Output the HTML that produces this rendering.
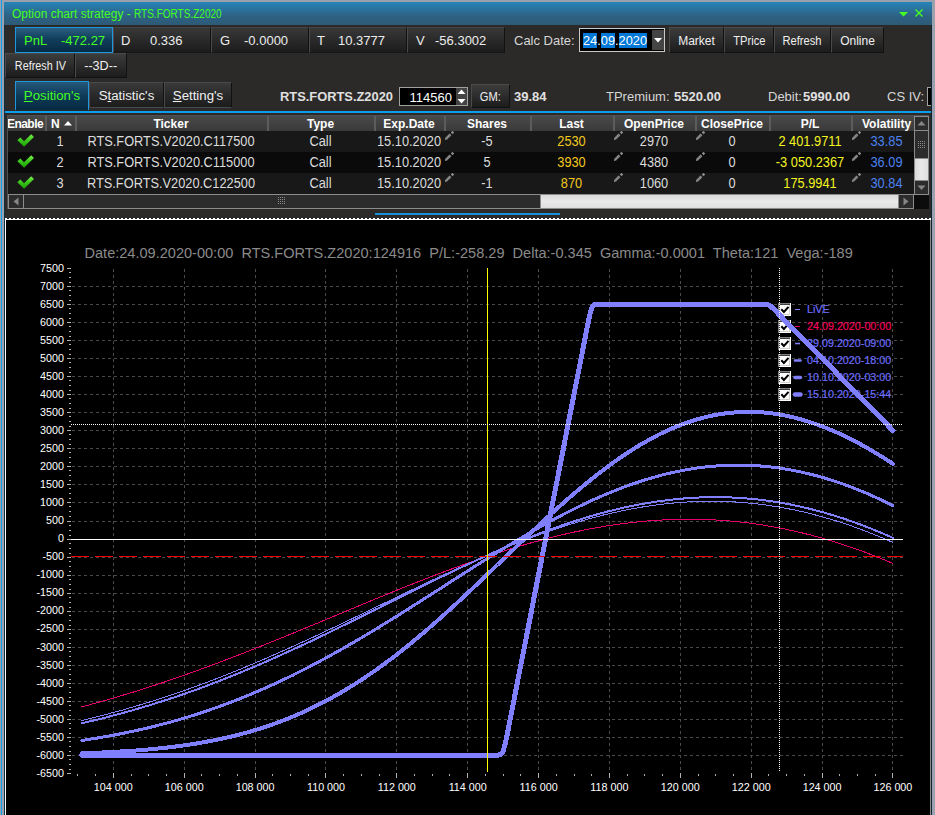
<!DOCTYPE html>
<html><head><meta charset="utf-8"><title>Option chart strategy - RTS.FORTS.Z2020</title>
<style>
html,body{margin:0;padding:0;}
body{width:935px;height:815px;overflow:hidden;position:relative;background:#9aa0ac;font-family:"Liberation Sans",Arial,sans-serif;font-size:13px;color:#dcdcdc;}
.abs{position:absolute;}
#win{position:absolute;left:5px;top:25px;width:926px;height:790px;background:#2b2a28;}
#titlebar{position:absolute;left:4px;top:2px;width:928px;height:23px;background:linear-gradient(#2585b8 0%,#2a739e 30%,#2d6284 60%,#2d5a76 100%);}
#title{position:absolute;left:8px;top:4px;font-size:12px;line-height:16px;color:#44ff22;white-space:pre;}
.btn{position:absolute;box-sizing:border-box;background:linear-gradient(#3c3c3c 0%,#2c2c2c 50%,#1c1c1c 100%);border:1px solid #4a4a4a;border-right-color:#111;border-bottom-color:#111;color:#f0f0f0;font-size:12px;text-align:center;white-space:pre;}
.btn span{display:inline-block;transform-origin:50% 50%;}
.ind{position:absolute;top:27px;height:26px;width:98px;box-sizing:border-box;background:linear-gradient(#383838 0%,#2a2a2a 50%,#1c1c1c 100%);border-left:1px solid #4a4a4a;border-right:1px solid #111;border-bottom:1px solid #161616;border-top:1px solid #444;color:#ececec;font-size:13px;line-height:24px;white-space:pre;}
.ind b{margin-top:1px;}
.ind b{font-weight:normal;position:absolute;top:0;}
.ind.sel{background:linear-gradient(#2a5e80 0%,#103c5a 50%,#072c44 100%);border:1px solid #1e96e0;color:#44ff22;}
.tab{position:absolute;top:82px;height:26px;box-sizing:border-box;background:linear-gradient(#3a3a3a 0%,#2a2a2a 50%,#1c1c1c 100%);border:1px solid #4a4a4a;border-right-color:#111;color:#f0f0f0;font-size:13.25px;line-height:26px;text-align:center;white-space:pre;}
.tab.sel{top:81px;height:29px;background:linear-gradient(#24587a 0%,#0e3a58 50%,#062a42 100%);border:1px solid #1e96e0;border-bottom:none;color:#44ff22;line-height:28px;}
.tab u{text-decoration:underline;text-underline-offset:1px;}
.lbl{position:absolute;white-space:pre;font-size:13px;line-height:16px;color:#d6d6d6;margin-top:1px;transform:scaleY(1.05);transform-origin:0 50%;}
.lbl b{color:#e0e0e0;}
#grid{position:absolute;left:7px;top:115px;width:907px;height:79px;background:#1b1b1b;overflow:hidden;}
.hd{position:absolute;top:0;height:16px;padding-top:1px;padding-right:2px;box-sizing:border-box;background:linear-gradient(#4a4a4a 0%,#3a3a3a 100%);border-left:2px solid #5c5c5c;font-weight:bold;font-size:12px;line-height:16px;color:#fff;text-align:center;white-space:pre;overflow:hidden;}
.row{position:absolute;left:0;width:907px;height:21px;font-size:12.8px;line-height:21px;color:#dcdcdc;white-space:pre;}
.row span{position:absolute;top:0;text-align:center;transform:scaleY(1.08);transform-origin:50% 50%;}
.y{color:#f0c81e;} .yy{color:#f4f420;} .bl{color:#4c82f0;}
</style></head><body>
<div class="abs" style="left:1px;top:0;width:1px;height:815px;background:#0aa0f0"></div>
<div class="abs" style="left:4px;top:25px;width:1px;height:790px;background:#0c3046"></div>
<div class="abs" style="left:931px;top:25px;width:1px;height:790px;background:#0c2434"></div>
<div id="titlebar"><div id="title">Option chart strategy - <span style="display:inline-block;transform-origin:0 50%;transform:scaleX(0.835)">RTS.FORTS.Z2020</span></div>
<svg class="abs" style="left:893px;top:6px" width="30" height="12"><path d="M2 4h9l-4.5 4.5z" fill="#44ff22"/><path d="M18.5 1.5l7 7M25.5 1.5l-7 7" stroke="#44ff22" stroke-width="1.35" fill="none"/></svg>
</div>
<div id="win"></div>

<!-- toolbar row 1 -->
<div class="ind sel" style="left:15px"><b style="left:8px">PnL</b><b style="left:45px">-472.27</b></div>
<div class="ind" style="left:113px"><b style="left:7px">D</b><b style="left:36px">0.336</b></div>
<div class="ind" style="left:211px"><b style="left:8px">G</b><b style="left:32px">-0.0000</b></div>
<div class="ind" style="left:309px"><b style="left:7px">T</b><b style="left:28px">10.3777</b></div>
<div class="ind" style="left:407px"><b style="left:8px">V</b><b style="left:27px">-56.3002</b></div>
<div class="lbl" style="left:514px;top:32px;">Calc Date:</div>
<div class="abs" style="left:579px;top:28px;width:86px;height:24px;box-sizing:border-box;border:1px solid #c8c8c8;background:#000;">
  <div class="abs" style="left:3px;top:4px;font-size:12.8px;line-height:16px;color:#fff;white-space:pre;"><span style="background:#0078d7">24</span>.<span style="background:#0078d7">09</span>.<span style="background:#0078d7">2020</span></div>
  <div class="abs" style="left:72px;top:1px;width:12px;height:20px;background:#444"></div>
  <svg class="abs" style="left:73px;top:9px" width="10" height="6"><path d="M1 0h8l-4 4.5z" fill="#fff"/></svg>
</div>
<div class="btn" style="left:669px;top:27px;width:55px;height:26px;line-height:26px;"><span>Market</span></div>
<div class="btn" style="left:724px;top:27px;width:50px;height:26px;line-height:26px;"><span style="transform:scaleX(0.93)">TPrice</span></div>
<div class="btn" style="left:774px;top:27px;width:57px;height:26px;line-height:26px;"><span style="transform:scaleX(0.93)">Refresh</span></div>
<div class="btn" style="left:831px;top:27px;width:53px;height:26px;line-height:26px;"><span>Online</span></div>

<!-- toolbar row 2 -->
<div class="btn" style="left:5px;top:53px;width:70px;height:25px;line-height:25px;"><span style="transform:scaleX(0.9)">Refresh IV</span></div>
<div class="btn" style="left:75px;top:53px;width:52px;height:25px;line-height:25px;"><span style="transform:scaleX(1.05)">--3D--</span></div>

<!-- tabs row -->
<div class="tab" style="left:89px;width:75px;">S<u>t</u>atistic's</div>
<div class="tab" style="left:164px;width:68px;"><u>S</u>etting's</div>
<div class="tab sel" style="left:15px;width:74px;"><u>P</u>osition's</div>
<div class="lbl" style="left:280px;top:88px;"><b style="display:inline-block;transform-origin:0 50%;transform:scaleX(0.99)">RTS.FORTS.Z2020</b></div>
<div class="abs" style="left:399px;top:87px;width:69px;height:19px;box-sizing:border-box;border:1px solid #a0a0a0;background:#000;">
  <div class="abs" style="right:15px;top:1.5px;font-size:13px;line-height:16px;color:#fff;transform:scaleY(1.05)">114560</div>
  <div class="abs" style="left:56px;top:0;width:11px;height:17px;background:#444"></div>
  <svg class="abs" style="left:56px;top:0" width="11" height="17"><path d="M1.5 6l4-4.5l4 4.5z M1.5 11l4 4.5l4-4.5z" fill="#fff"/></svg>
</div>
<div class="btn" style="left:471px;top:84px;width:39px;height:24px;line-height:24px;"><span style="transform:scaleX(0.93)">GM:</span></div>
<div class="lbl" style="left:514px;top:88px;"><b>39.84</b></div>
<div class="lbl" style="left:606px;top:88px;">TPremium:</div>
<div class="lbl" style="left:674px;top:88px;"><b>5520.00</b></div>
<div class="lbl" style="left:768px;top:88px;">Debit:</div>
<div class="lbl" style="left:803px;top:88px;"><b>5990.00</b></div>
<div class="lbl" style="left:887px;top:88px;">CS IV:</div>
<div class="abs" style="left:927px;top:87px;width:4px;height:19px;box-sizing:border-box;border:1px solid #a0a0a0;border-right:none;background:#000;"></div>

<!-- blue line under tabs -->
<div class="abs" style="left:5px;top:111px;width:926px;height:2px;background:#0c9eea"></div>

<!-- table -->
<div id="grid">
<div class="hd" style="left:-1px;width:39px"><span style="display:inline-block;letter-spacing:-0.55px;margin-left:-1px">Enable</span></div>
<div class="hd" style="left:38px;width:30px"><span style="position:absolute;left:4px;top:1px">N</span><svg style="position:absolute;left:17px;top:6px" width="9" height="6"><path d="M0 4.5h8l-4-4.5z" fill="#fff"/></svg></div>
<div class="hd" style="left:68px;width:192px">Ticker</div>
<div class="hd" style="left:260px;width:107px">Type</div>
<div class="hd" style="left:367px;width:70px">Exp.Date</div>
<div class="hd" style="left:437px;width:86px">Shares</div>
<div class="hd" style="left:523px;width:83px">Last</div>
<div class="hd" style="left:606px;width:82px">OpenPrice</div>
<div class="hd" style="left:688px;width:74px">ClosePrice</div>
<div class="hd" style="left:762px;width:82px">P/L</div>
<div class="hd" style="left:844px;width:71px">Volatility</div>
<div class="row" style="top:16px;background:#181818"><svg style="position:absolute;left:10px;top:3px" width="18" height="14"><defs><linearGradient id="cg0" x1="0" y1="0" x2="0" y2="1"><stop offset="0" stop-color="#7cf04c"/><stop offset="0.5" stop-color="#38c418"/><stop offset="1" stop-color="#1c9c08"/></linearGradient></defs><path d="M0.3 6.3L3.4 3.6L7 7.2L14.2 0.2L17 2.9L7.1 12.8z" fill="url(#cg0)"/></svg><span class="" style="left:38px;width:30px">1</span><span class="" style="left:68px;width:192px">RTS.FORTS.V2020.C117500</span><span class="" style="left:260px;width:107px">Call</span><span class="" style="left:367px;width:70px">15.10.2020</span><span class="" style="left:437px;width:86px">-5</span><span class="y" style="left:523px;width:83px">2530</span><span class="" style="left:606px;width:82px">2970</span><span class="" style="left:688px;width:74px">0</span><span class="yy" style="left:762px;width:82px">2 401.9711</span><span class="bl" style="left:844px;width:71px">33.85</span><svg style="position:absolute;left:437px;top:0px" width="12" height="10"><path d="M0.9 9L3 8.6L7.4 4.2L5.6 2.4L1.3 6.8z" fill="#8e8e8e"/><path d="M8.6 3.2L6.8 1.4L8.4 -0.2L10.2 1.6z" fill="#8e8e8e"/><path d="M2.2 6.6l1.6 1.6M3.6 5.2l1.6 1.6M5 3.8l1.6 1.6" stroke="#555" stroke-width="0.5"/></svg><svg style="position:absolute;left:606px;top:0px" width="12" height="10"><path d="M0.9 9L3 8.6L7.4 4.2L5.6 2.4L1.3 6.8z" fill="#8e8e8e"/><path d="M8.6 3.2L6.8 1.4L8.4 -0.2L10.2 1.6z" fill="#8e8e8e"/><path d="M2.2 6.6l1.6 1.6M3.6 5.2l1.6 1.6M5 3.8l1.6 1.6" stroke="#555" stroke-width="0.5"/></svg><svg style="position:absolute;left:688px;top:0px" width="12" height="10"><path d="M0.9 9L3 8.6L7.4 4.2L5.6 2.4L1.3 6.8z" fill="#8e8e8e"/><path d="M8.6 3.2L6.8 1.4L8.4 -0.2L10.2 1.6z" fill="#8e8e8e"/><path d="M2.2 6.6l1.6 1.6M3.6 5.2l1.6 1.6M5 3.8l1.6 1.6" stroke="#555" stroke-width="0.5"/></svg><svg style="position:absolute;left:844px;top:0px" width="12" height="10"><path d="M0.9 9L3 8.6L7.4 4.2L5.6 2.4L1.3 6.8z" fill="#8e8e8e"/><path d="M8.6 3.2L6.8 1.4L8.4 -0.2L10.2 1.6z" fill="#8e8e8e"/><path d="M2.2 6.6l1.6 1.6M3.6 5.2l1.6 1.6M5 3.8l1.6 1.6" stroke="#555" stroke-width="0.5"/></svg></div>
<div class="row" style="top:37px;background:#0a0a0a"><svg style="position:absolute;left:10px;top:3px" width="18" height="14"><defs><linearGradient id="cg1" x1="0" y1="0" x2="0" y2="1"><stop offset="0" stop-color="#7cf04c"/><stop offset="0.5" stop-color="#38c418"/><stop offset="1" stop-color="#1c9c08"/></linearGradient></defs><path d="M0.3 6.3L3.4 3.6L7 7.2L14.2 0.2L17 2.9L7.1 12.8z" fill="url(#cg1)"/></svg><span class="" style="left:38px;width:30px">2</span><span class="" style="left:68px;width:192px">RTS.FORTS.V2020.C115000</span><span class="" style="left:260px;width:107px">Call</span><span class="" style="left:367px;width:70px">15.10.2020</span><span class="" style="left:437px;width:86px">5</span><span class="y" style="left:523px;width:83px">3930</span><span class="" style="left:606px;width:82px">4380</span><span class="" style="left:688px;width:74px">0</span><span class="yy" style="left:762px;width:82px">-3 050.2367</span><span class="bl" style="left:844px;width:71px">36.09</span><svg style="position:absolute;left:437px;top:0px" width="12" height="10"><path d="M0.9 9L3 8.6L7.4 4.2L5.6 2.4L1.3 6.8z" fill="#8e8e8e"/><path d="M8.6 3.2L6.8 1.4L8.4 -0.2L10.2 1.6z" fill="#8e8e8e"/><path d="M2.2 6.6l1.6 1.6M3.6 5.2l1.6 1.6M5 3.8l1.6 1.6" stroke="#555" stroke-width="0.5"/></svg><svg style="position:absolute;left:606px;top:0px" width="12" height="10"><path d="M0.9 9L3 8.6L7.4 4.2L5.6 2.4L1.3 6.8z" fill="#8e8e8e"/><path d="M8.6 3.2L6.8 1.4L8.4 -0.2L10.2 1.6z" fill="#8e8e8e"/><path d="M2.2 6.6l1.6 1.6M3.6 5.2l1.6 1.6M5 3.8l1.6 1.6" stroke="#555" stroke-width="0.5"/></svg><svg style="position:absolute;left:688px;top:0px" width="12" height="10"><path d="M0.9 9L3 8.6L7.4 4.2L5.6 2.4L1.3 6.8z" fill="#8e8e8e"/><path d="M8.6 3.2L6.8 1.4L8.4 -0.2L10.2 1.6z" fill="#8e8e8e"/><path d="M2.2 6.6l1.6 1.6M3.6 5.2l1.6 1.6M5 3.8l1.6 1.6" stroke="#555" stroke-width="0.5"/></svg><svg style="position:absolute;left:844px;top:0px" width="12" height="10"><path d="M0.9 9L3 8.6L7.4 4.2L5.6 2.4L1.3 6.8z" fill="#8e8e8e"/><path d="M8.6 3.2L6.8 1.4L8.4 -0.2L10.2 1.6z" fill="#8e8e8e"/><path d="M2.2 6.6l1.6 1.6M3.6 5.2l1.6 1.6M5 3.8l1.6 1.6" stroke="#555" stroke-width="0.5"/></svg></div>
<div class="row" style="top:58px;background:#181818"><svg style="position:absolute;left:10px;top:3px" width="18" height="14"><defs><linearGradient id="cg2" x1="0" y1="0" x2="0" y2="1"><stop offset="0" stop-color="#7cf04c"/><stop offset="0.5" stop-color="#38c418"/><stop offset="1" stop-color="#1c9c08"/></linearGradient></defs><path d="M0.3 6.3L3.4 3.6L7 7.2L14.2 0.2L17 2.9L7.1 12.8z" fill="url(#cg2)"/></svg><span class="" style="left:38px;width:30px">3</span><span class="" style="left:68px;width:192px">RTS.FORTS.V2020.C122500</span><span class="" style="left:260px;width:107px">Call</span><span class="" style="left:367px;width:70px">15.10.2020</span><span class="" style="left:437px;width:86px">-1</span><span class="y" style="left:523px;width:83px">870</span><span class="" style="left:606px;width:82px">1060</span><span class="" style="left:688px;width:74px">0</span><span class="yy" style="left:762px;width:82px">175.9941</span><span class="bl" style="left:844px;width:71px">30.84</span><svg style="position:absolute;left:437px;top:0px" width="12" height="10"><path d="M0.9 9L3 8.6L7.4 4.2L5.6 2.4L1.3 6.8z" fill="#8e8e8e"/><path d="M8.6 3.2L6.8 1.4L8.4 -0.2L10.2 1.6z" fill="#8e8e8e"/><path d="M2.2 6.6l1.6 1.6M3.6 5.2l1.6 1.6M5 3.8l1.6 1.6" stroke="#555" stroke-width="0.5"/></svg><svg style="position:absolute;left:606px;top:0px" width="12" height="10"><path d="M0.9 9L3 8.6L7.4 4.2L5.6 2.4L1.3 6.8z" fill="#8e8e8e"/><path d="M8.6 3.2L6.8 1.4L8.4 -0.2L10.2 1.6z" fill="#8e8e8e"/><path d="M2.2 6.6l1.6 1.6M3.6 5.2l1.6 1.6M5 3.8l1.6 1.6" stroke="#555" stroke-width="0.5"/></svg><svg style="position:absolute;left:688px;top:0px" width="12" height="10"><path d="M0.9 9L3 8.6L7.4 4.2L5.6 2.4L1.3 6.8z" fill="#8e8e8e"/><path d="M8.6 3.2L6.8 1.4L8.4 -0.2L10.2 1.6z" fill="#8e8e8e"/><path d="M2.2 6.6l1.6 1.6M3.6 5.2l1.6 1.6M5 3.8l1.6 1.6" stroke="#555" stroke-width="0.5"/></svg><svg style="position:absolute;left:844px;top:0px" width="12" height="10"><path d="M0.9 9L3 8.6L7.4 4.2L5.6 2.4L1.3 6.8z" fill="#8e8e8e"/><path d="M8.6 3.2L6.8 1.4L8.4 -0.2L10.2 1.6z" fill="#8e8e8e"/><path d="M2.2 6.6l1.6 1.6M3.6 5.2l1.6 1.6M5 3.8l1.6 1.6" stroke="#555" stroke-width="0.5"/></svg></div>
</div>
<div class="abs" style="left:7px;top:115px;width:922px;height:1px;background:#505050"></div>
<div class="abs" style="left:7px;top:115px;width:1px;height:94px;background:#505050"></div>
<div class="abs" style="left:914px;top:116px;width:15px;height:93px;background:#0c0c0c"></div>
<div class="abs" style="left:914px;top:116px;width:15px;height:78px;background:linear-gradient(90deg,#dadada,#e9e9e9 50%,#dedede);border:1px solid #8c8c8c;box-sizing:border-box"></div>
<div class="abs" style="left:914px;top:116px;width:15px;height:15px;background:#2c2c2c;border:1px solid #8c8c8c;box-sizing:border-box"></div><svg class="abs" style="left:914px;top:116px" width="15" height="15"><path d="M3.5 9.5h8l-4-4.5z" fill="#868686"/></svg>
<div class="abs" style="left:914px;top:180px;width:15px;height:15px;background:#2c2c2c;border:1px solid #8c8c8c;box-sizing:border-box"></div><svg class="abs" style="left:914px;top:180px" width="15" height="15"><path d="M3.5 5.5h8l-4 4.5z" fill="#868686"/></svg>
<div class="abs" style="left:914px;top:130px;width:15px;height:29px;background:#2c2c2c;border:1px solid #8c8c8c;box-sizing:border-box"></div>
<div class="abs" style="left:918px;top:141px;width:8px;height:8px;background-image:radial-gradient(circle at 0.5px 0.5px,#8a8a8a 0.6px,transparent 0.7px);background-size:2px 2px"></div>
<div class="abs" style="left:8px;top:194px;width:906px;height:15px;background:linear-gradient(#dadada,#e9e9e9 50%,#dedede);border:1px solid #8c8c8c;box-sizing:border-box"></div>
<div class="abs" style="left:8px;top:194px;width:16px;height:15px;background:#2c2c2c;border:1px solid #8c8c8c;box-sizing:border-box"></div><svg class="abs" style="left:8px;top:194px" width="16" height="15"><path d="M10.5 3.5v8l-5-4z" fill="#868686"/></svg>
<div class="abs" style="left:898px;top:194px;width:16px;height:15px;background:#2c2c2c;border:1px solid #8c8c8c;box-sizing:border-box"></div><svg class="abs" style="left:898px;top:194px" width="16" height="15"><path d="M5.5 3.5v8l5-4z" fill="#868686"/></svg>
<div class="abs" style="left:23px;top:194px;width:518px;height:15px;background:#2c2c2c;border:1px solid #8c8c8c;box-sizing:border-box"></div>
<div class="abs" style="left:278px;top:197px;width:8px;height:8px;background-image:radial-gradient(circle at 0.5px 0.5px,#8a8a8a 0.6px,transparent 0.7px);background-size:2px 2px"></div>

<!-- splitter line -->
<div class="abs" style="left:375px;top:213px;width:185px;height:2px;background:#1790d8"></div>

<!-- chart -->
<div class="abs" style="left:5px;top:218px;width:926px;height:597px;background:#000;border-left:1px solid #fff;box-sizing:border-box;"></div>
<div class="abs" style="left:5px;top:218px;width:926px;height:1px;background:repeating-linear-gradient(90deg,#fff 0 2px,#222 2px 4px)"></div>
<div class="abs" style="left:5px;top:219px;width:926px;height:1px;background:#fff"></div>
<div class="abs" style="left:930px;top:220px;width:1px;height:595px;background:#8a8a8a"></div>
<svg id="chart" width="935" height="815" viewBox="0 0 935 815" style="position:absolute;left:0;top:0">
<g stroke="#4a4a4a" stroke-width="1" stroke-dasharray="3 3" shape-rendering="crispEdges">
<line x1="72" x2="903" y1="755.5" y2="755.5"/><line x1="72" x2="903" y1="737.5" y2="737.5"/><line x1="72" x2="903" y1="719.5" y2="719.5"/><line x1="72" x2="903" y1="701.5" y2="701.5"/><line x1="72" x2="903" y1="683.5" y2="683.5"/><line x1="72" x2="903" y1="665.5" y2="665.5"/><line x1="72" x2="903" y1="647.5" y2="647.5"/><line x1="72" x2="903" y1="629.5" y2="629.5"/><line x1="72" x2="903" y1="611.5" y2="611.5"/><line x1="72" x2="903" y1="593.5" y2="593.5"/><line x1="72" x2="903" y1="575.5" y2="575.5"/><line x1="72" x2="903" y1="557.5" y2="557.5"/><line x1="72" x2="903" y1="539.5" y2="539.5"/><line x1="72" x2="903" y1="521.5" y2="521.5"/><line x1="72" x2="903" y1="502.5" y2="502.5"/><line x1="72" x2="903" y1="484.5" y2="484.5"/><line x1="72" x2="903" y1="466.5" y2="466.5"/><line x1="72" x2="903" y1="448.5" y2="448.5"/><line x1="72" x2="903" y1="430.5" y2="430.5"/><line x1="72" x2="903" y1="412.5" y2="412.5"/><line x1="72" x2="903" y1="394.5" y2="394.5"/><line x1="72" x2="903" y1="376.5" y2="376.5"/><line x1="72" x2="903" y1="358.5" y2="358.5"/><line x1="72" x2="903" y1="340.5" y2="340.5"/><line x1="72" x2="903" y1="322.5" y2="322.5"/><line x1="72" x2="903" y1="304.5" y2="304.5"/><line x1="72" x2="903" y1="286.5" y2="286.5"/>
<line x1="113.5" x2="113.5" y1="269" y2="773"/><line x1="184.5" x2="184.5" y1="269" y2="773"/><line x1="255.5" x2="255.5" y1="269" y2="773"/><line x1="325.5" x2="325.5" y1="269" y2="773"/><line x1="396.5" x2="396.5" y1="269" y2="773"/><line x1="467.5" x2="467.5" y1="269" y2="773"/><line x1="538.5" x2="538.5" y1="269" y2="773"/><line x1="609.5" x2="609.5" y1="269" y2="773"/><line x1="680.5" x2="680.5" y1="269" y2="773"/><line x1="751.5" x2="751.5" y1="269" y2="773"/><line x1="822.5" x2="822.5" y1="269" y2="773"/><line x1="892.5" x2="892.5" y1="269" y2="773"/>
</g>
<g font-family="Liberation Sans, Arial, sans-serif" font-size="10.75px">
<g shape-rendering="crispEdges"><rect x="778" y="303" width="13" height="13" fill="#fff"/><path d="M778 315.5V303.5H790" fill="none" stroke="#808080"/><path d="M779.5 314.5V304.5H789.5" fill="none" stroke="#404040"/><path d="M779.5 314.5H789.5V304.5" fill="none" stroke="#d4d0c8"/></g><path d="M781.3 309.2 l2.6 2.8 l4.6 -5.2" fill="none" stroke="#000" stroke-width="2"/><line x1="795" x2="800" y1="309.5" y2="309.5" stroke="#8080ff" stroke-width="1" stroke-linecap="butt"/><text x="807" y="312.6" fill="#6c6cfa" stroke="#6c6cfa" stroke-width="0.2">LiVE</text><g shape-rendering="crispEdges"><rect x="778" y="320" width="13" height="13" fill="#fff"/><path d="M778 332.5V320.5H790" fill="none" stroke="#808080"/><path d="M779.5 331.5V321.5H789.5" fill="none" stroke="#404040"/><path d="M779.5 331.5H789.5V321.5" fill="none" stroke="#d4d0c8"/></g><path d="M781.3 326.2 l2.6 2.8 l4.6 -5.2" fill="none" stroke="#000" stroke-width="2"/><line x1="795" x2="800" y1="326.5" y2="326.5" stroke="#f0006e" stroke-width="1" stroke-linecap="butt"/><text x="807" y="329.6" fill="#f0005c" stroke="#f0005c" stroke-width="0.2">24.09.2020-00:00</text><g shape-rendering="crispEdges"><rect x="778" y="337" width="13" height="13" fill="#fff"/><path d="M778 349.5V337.5H790" fill="none" stroke="#808080"/><path d="M779.5 348.5V338.5H789.5" fill="none" stroke="#404040"/><path d="M779.5 348.5H789.5V338.5" fill="none" stroke="#d4d0c8"/></g><path d="M781.3 343.2 l2.6 2.8 l4.6 -5.2" fill="none" stroke="#000" stroke-width="2"/><line x1="795" x2="800" y1="343.5" y2="343.5" stroke="#8080ff" stroke-width="1.6" stroke-linecap="butt"/><text x="807" y="346.6" fill="#6c6cfa" stroke="#6c6cfa" stroke-width="0.2">29.09.2020-09:00</text><g shape-rendering="crispEdges"><rect x="778" y="354" width="13" height="13" fill="#fff"/><path d="M778 366.5V354.5H790" fill="none" stroke="#808080"/><path d="M779.5 365.5V355.5H789.5" fill="none" stroke="#404040"/><path d="M779.5 365.5H789.5V355.5" fill="none" stroke="#d4d0c8"/></g><path d="M781.3 360.2 l2.6 2.8 l4.6 -5.2" fill="none" stroke="#000" stroke-width="2"/><line x1="795" x2="800.5" y1="360.5" y2="360.5" stroke="#8080ff" stroke-width="2.6" stroke-linecap="round"/><text x="807" y="363.6" fill="#6c6cfa" stroke="#6c6cfa" stroke-width="0.2">04.10.2020-18:00</text><g shape-rendering="crispEdges"><rect x="778" y="371" width="13" height="13" fill="#fff"/><path d="M778 383.5V371.5H790" fill="none" stroke="#808080"/><path d="M779.5 382.5V372.5H789.5" fill="none" stroke="#404040"/><path d="M779.5 382.5H789.5V372.5" fill="none" stroke="#d4d0c8"/></g><path d="M781.3 377.2 l2.6 2.8 l4.6 -5.2" fill="none" stroke="#000" stroke-width="2"/><line x1="795" x2="800.5" y1="377.5" y2="377.5" stroke="#8080ff" stroke-width="3.4" stroke-linecap="round"/><text x="807" y="380.6" fill="#6c6cfa" stroke="#6c6cfa" stroke-width="0.2">10.10.2020-03:00</text><g shape-rendering="crispEdges"><rect x="778" y="388" width="13" height="13" fill="#fff"/><path d="M778 400.5V388.5H790" fill="none" stroke="#808080"/><path d="M779.5 399.5V389.5H789.5" fill="none" stroke="#404040"/><path d="M779.5 399.5H789.5V389.5" fill="none" stroke="#d4d0c8"/></g><path d="M781.3 394.2 l2.6 2.8 l4.6 -5.2" fill="none" stroke="#000" stroke-width="2"/><line x1="795" x2="800.5" y1="394.5" y2="394.5" stroke="#8080ff" stroke-width="4.4" stroke-linecap="round"/><text x="807" y="397.6" fill="#6c6cfa" stroke="#6c6cfa" stroke-width="0.2">15.10.2020-15:44</text>
</g>
<g shape-rendering="crispEdges">
<polyline points="81.8,720.4 85.9,719.5 90.0,718.5 94.0,717.5 98.1,716.5 102.2,715.4 106.3,714.4 110.3,713.3 114.4,712.2 118.5,711.1 122.6,710.0 126.6,708.8 130.7,707.6 134.8,706.5 138.9,705.2 143.0,704.0 147.0,702.8 151.1,701.5 155.2,700.2 159.3,698.9 163.3,697.6 167.4,696.2 171.5,694.9 175.6,693.5 179.6,692.1 183.7,690.7 187.8,689.3 191.9,687.8 195.9,686.3 200.0,684.8 204.1,683.3 208.2,681.8 212.2,680.2 216.3,678.7 220.4,677.1 224.5,675.5 228.5,673.9 232.6,672.3 236.7,670.6 240.8,669.0 244.8,667.3 248.9,665.6 253.0,663.9 257.1,662.1 261.2,660.4 265.2,658.7 269.3,656.9 273.4,655.1 277.5,653.3 281.5,651.5 285.6,649.7 289.7,647.9 293.8,646.0 297.8,644.2 301.9,642.3 306.0,640.4 310.1,638.5 314.1,636.7 318.2,634.8 322.3,632.8 326.4,630.9 330.4,629.0 334.5,627.1 338.6,625.1 342.7,623.2 346.7,621.2 350.8,619.3 354.9,617.3 359.0,615.4 363.1,613.4 367.1,611.4 371.2,609.5 375.3,607.5 379.4,605.5 383.4,603.6 387.5,601.6 391.6,599.6 395.7,597.7 399.7,595.7 403.8,593.7 407.9,591.8 412.0,589.8 416.0,587.9 420.1,585.9 424.2,584.0 428.3,582.1 432.3,580.1 436.4,578.2 440.5,576.3 444.6,574.4 448.6,572.6 452.7,570.7 456.8,568.8 460.9,567.0 464.9,565.1 469.0,563.3 473.1,561.5 477.2,559.7 481.3,557.9 485.3,556.2 489.4,554.4 493.5,552.7 497.6,551.0 499.6,550.2 501.4,549.4 501.6,549.3 503.1,548.7 504.9,548.0 505.7,547.7 506.7,547.3 509.8,546.0 513.9,544.4 517.9,542.8 522.0,541.2 526.1,539.6 530.2,538.1 534.2,536.6 538.3,535.1 542.4,533.6 546.5,532.2 550.5,530.8 554.6,529.4 558.7,528.0 562.8,526.7 566.8,525.4 570.9,524.1 575.0,522.9 579.1,521.7 583.2,520.5 587.2,519.3 590.0,518.6 591.3,518.2 591.7,518.1 593.5,517.6 595.4,517.1 599.5,516.1 603.5,515.0 607.6,514.1 611.7,513.1 615.8,512.2 619.8,511.3 623.9,510.4 628.0,509.6 632.1,508.8 636.1,508.1 640.2,507.4 644.3,506.7 648.4,506.1 652.4,505.5 656.5,504.9 660.6,504.4 664.7,503.9 668.7,503.5 672.8,503.1 676.9,502.7 681.0,502.4 685.0,502.1 689.1,501.9 693.2,501.7 697.3,501.5 701.4,501.4 705.4,501.3 709.5,501.3 713.6,501.3 717.7,501.3 721.7,501.4 725.8,501.6 729.9,501.7 734.0,501.9 738.0,502.2 742.1,502.5 746.2,502.8 750.3,503.2 754.3,503.6 758.4,504.1 762.5,504.6 766.6,505.1 767.1,505.2 768.9,505.5 770.6,505.7 770.7,505.7 774.7,506.4 778.8,507.0 782.9,507.7 786.9,508.5 791.0,509.3 795.1,510.1 799.2,511.0 803.2,511.9 807.3,512.9 811.4,513.9 815.5,515.0 819.6,516.1 823.6,517.2 827.7,518.4 831.8,519.6 835.9,520.8 839.9,522.1 844.0,523.4 848.1,524.8 852.2,526.2 856.2,527.7 860.3,529.2 864.4,530.7 868.5,532.3 872.5,533.9 876.6,535.5 880.7,537.2 884.8,538.9 888.8,540.7 892.9,542.5" fill="none" stroke="#8080ff" stroke-width="1" stroke-linejoin="round" stroke-linecap="round"/><polyline points="81.8,706.8 85.9,705.7 90.0,704.7 94.0,703.5 98.1,702.4 102.2,701.3 106.3,700.1 110.3,698.9 114.4,697.8 118.5,696.5 122.6,695.3 126.6,694.1 130.7,692.9 134.8,691.6 138.9,690.3 143.0,689.0 147.0,687.7 151.1,686.4 155.2,685.1 159.3,683.7 163.3,682.4 167.4,681.0 171.5,679.6 175.6,678.2 179.6,676.8 183.7,675.4 187.8,673.9 191.9,672.5 195.9,671.0 200.0,669.5 204.1,668.0 208.2,666.5 212.2,665.0 216.3,663.5 220.4,662.0 224.5,660.4 228.5,658.9 232.6,657.3 236.7,655.7 240.8,654.1 244.8,652.6 248.9,651.0 253.0,649.3 257.1,647.7 261.2,646.1 265.2,644.5 269.3,642.8 273.4,641.2 277.5,639.5 281.5,637.9 285.6,636.2 289.7,634.5 293.8,632.9 297.8,631.2 301.9,629.5 306.0,627.8 310.1,626.1 314.1,624.4 318.2,622.8 322.3,621.1 326.4,619.4 330.4,617.7 334.5,616.0 338.6,614.3 342.7,612.6 346.7,610.9 350.8,609.2 354.9,607.5 359.0,605.8 363.1,604.1 367.1,602.4 371.2,600.7 375.3,599.0 379.4,597.4 383.4,595.7 387.5,594.0 391.6,592.4 395.7,590.7 399.7,589.1 403.8,587.4 407.9,585.8 412.0,584.2 416.0,582.6 420.1,581.0 424.2,579.4 428.3,577.8 432.3,576.2 436.4,574.7 440.5,573.1 444.6,571.6 448.6,570.1 452.7,568.6 456.8,567.1 460.9,565.6 464.9,564.1 469.0,562.7 473.1,561.2 477.2,559.8 481.3,558.4 485.3,557.0 489.4,555.7 493.5,554.3 497.6,553.0 499.6,552.3 501.4,551.8 501.6,551.7 503.1,551.2 504.9,550.6 505.7,550.4 506.7,550.1 509.8,549.1 513.9,547.9 517.9,546.6 522.0,545.4 526.1,544.3 530.2,543.1 534.2,542.0 538.3,540.8 542.4,539.8 546.5,538.7 550.5,537.6 554.6,536.6 558.7,535.6 562.8,534.7 566.8,533.7 570.9,532.8 575.0,531.9 579.1,531.1 583.2,530.2 587.2,529.4 590.0,528.9 591.3,528.6 591.7,528.6 593.5,528.2 595.4,527.9 599.5,527.2 603.5,526.5 607.6,525.8 611.7,525.2 615.8,524.6 619.8,524.0 623.9,523.5 628.0,523.0 632.1,522.5 636.1,522.1 640.2,521.6 644.3,521.3 648.4,520.9 652.4,520.6 656.5,520.3 660.6,520.1 664.7,519.8 668.7,519.7 672.8,519.5 676.9,519.4 681.0,519.3 685.0,519.3 689.1,519.3 693.2,519.3 697.3,519.3 701.4,519.4 705.4,519.5 709.5,519.7 713.6,519.9 717.7,520.1 721.7,520.4 725.8,520.7 729.9,521.0 734.0,521.4 738.0,521.8 742.1,522.3 746.2,522.7 750.3,523.2 754.3,523.8 758.4,524.4 762.5,525.0 766.6,525.7 767.1,525.8 768.9,526.1 770.6,526.4 770.7,526.4 774.7,527.1 778.8,527.8 782.9,528.6 786.9,529.5 791.0,530.4 795.1,531.3 799.2,532.2 803.2,533.2 807.3,534.2 811.4,535.2 815.5,536.3 819.6,537.4 823.6,538.6 827.7,539.8 831.8,541.0 835.9,542.3 839.9,543.6 844.0,544.9 848.1,546.3 852.2,547.7 856.2,549.1 860.3,550.5 864.4,552.0 868.5,553.6 872.5,555.1 876.6,556.7 880.7,558.4 884.8,560.0 888.8,561.7 892.9,563.5" fill="none" stroke="#e8006e" stroke-width="1" stroke-linejoin="round" stroke-linecap="round"/><polyline points="81.8,723.2 85.9,722.3 90.0,721.3 94.0,720.4 98.1,719.4 102.2,718.4 106.3,717.4 110.3,716.3 114.4,715.2 118.5,714.2 122.6,713.1 126.6,711.9 130.7,710.8 134.8,709.6 138.9,708.4 143.0,707.2 147.0,706.0 151.1,704.8 155.2,703.5 159.3,702.2 163.3,700.9 167.4,699.6 171.5,698.2 175.6,696.9 179.6,695.5 183.7,694.1 187.8,692.7 191.9,691.2 195.9,689.8 200.0,688.3 204.1,686.8 208.2,685.2 212.2,683.7 216.3,682.1 220.4,680.6 224.5,679.0 228.5,677.3 232.6,675.7 236.7,674.0 240.8,672.4 244.8,670.7 248.9,669.0 253.0,667.3 257.1,665.5 261.2,663.8 265.2,662.0 269.3,660.2 273.4,658.4 277.5,656.6 281.5,654.8 285.6,652.9 289.7,651.0 293.8,649.2 297.8,647.3 301.9,645.4 306.0,643.5 310.1,641.6 314.1,639.6 318.2,637.7 322.3,635.7 326.4,633.8 330.4,631.8 334.5,629.8 338.6,627.8 342.7,625.8 346.7,623.8 350.8,621.8 354.9,619.8 359.0,617.8 363.1,615.8 367.1,613.8 371.2,611.7 375.3,609.7 379.4,607.7 383.4,605.6 387.5,603.6 391.6,601.5 395.7,599.5 399.7,597.5 403.8,595.4 407.9,593.4 412.0,591.4 416.0,589.4 420.1,587.3 424.2,585.3 428.3,583.3 432.3,581.3 436.4,579.3 440.5,577.3 444.6,575.4 448.6,573.4 452.7,571.5 456.8,569.5 460.9,567.6 464.9,565.7 469.0,563.7 473.1,561.9 477.2,560.0 481.3,558.1 485.3,556.3 489.4,554.4 493.5,552.6 497.6,550.8 499.6,549.9 501.4,549.2 501.6,549.0 503.1,548.4 504.9,547.6 505.7,547.3 506.7,546.9 509.8,545.5 513.9,543.8 517.9,542.1 522.0,540.5 526.1,538.8 530.2,537.2 534.2,535.6 538.3,534.0 542.4,532.4 546.5,530.9 550.5,529.4 554.6,527.9 558.7,526.5 562.8,525.1 566.8,523.7 570.9,522.3 575.0,521.0 579.1,519.7 583.2,518.4 587.2,517.2 590.0,516.4 591.3,516.0 591.7,515.9 593.5,515.4 595.4,514.8 599.5,513.7 603.5,512.6 607.6,511.5 611.7,510.5 615.8,509.5 619.8,508.5 623.9,507.6 628.0,506.7 632.1,505.9 636.1,505.1 640.2,504.3 644.3,503.6 648.4,502.9 652.4,502.2 656.5,501.6 660.6,501.0 664.7,500.5 668.7,499.9 672.8,499.5 676.9,499.1 681.0,498.7 685.0,498.4 689.1,498.1 693.2,497.8 697.3,497.6 701.4,497.4 705.4,497.3 709.5,497.2 713.6,497.2 717.7,497.2 721.7,497.2 725.8,497.3 729.9,497.4 734.0,497.6 738.0,497.8 742.1,498.1 746.2,498.4 750.3,498.8 754.3,499.1 758.4,499.6 762.5,500.1 766.6,500.6 767.1,500.7 768.9,500.9 770.6,501.2 770.7,501.2 774.7,501.8 778.8,502.4 782.9,503.1 786.9,503.9 791.0,504.6 795.1,505.5 799.2,506.3 803.2,507.3 807.3,508.2 811.4,509.2 815.5,510.3 819.6,511.3 823.6,512.5 827.7,513.6 831.8,514.9 835.9,516.1 839.9,517.4 844.0,518.7 848.1,520.1 852.2,521.5 856.2,523.0 860.3,524.5 864.4,526.0 868.5,527.6 872.5,529.2 876.6,530.9 880.7,532.6 884.8,534.3 888.8,536.1 892.9,537.9" fill="none" stroke="#8080ff" stroke-width="2" stroke-linejoin="round" stroke-linecap="round"/><polyline points="81.8,740.5 85.9,739.9 90.0,739.2 94.0,738.6 98.1,737.9 102.2,737.2 106.3,736.5 110.3,735.8 114.4,735.0 118.5,734.2 122.6,733.4 126.6,732.6 130.7,731.7 134.8,730.8 138.9,729.9 143.0,729.0 147.0,728.1 151.1,727.1 155.2,726.1 159.3,725.0 163.3,724.0 167.4,722.9 171.5,721.8 175.6,720.6 179.6,719.5 183.7,718.3 187.8,717.0 191.9,715.8 195.9,714.5 200.0,713.2 204.1,711.8 208.2,710.4 212.2,709.0 216.3,707.6 220.4,706.1 224.5,704.7 228.5,703.1 232.6,701.6 236.7,700.0 240.8,698.4 244.8,696.7 248.9,695.1 253.0,693.3 257.1,691.6 261.2,689.8 265.2,688.1 269.3,686.2 273.4,684.4 277.5,682.5 281.5,680.6 285.6,678.6 289.7,676.7 293.8,674.7 297.8,672.6 301.9,670.6 306.0,668.5 310.1,666.4 314.1,664.3 318.2,662.1 322.3,659.9 326.4,657.7 330.4,655.5 334.5,653.2 338.6,650.9 342.7,648.6 346.7,646.3 350.8,643.9 354.9,641.6 359.0,639.2 363.1,636.8 367.1,634.3 371.2,631.9 375.3,629.4 379.4,626.9 383.4,624.4 387.5,621.9 391.6,619.4 395.7,616.9 399.7,614.3 403.8,611.8 407.9,609.2 412.0,606.6 416.0,604.0 420.1,601.4 424.2,598.8 428.3,596.2 432.3,593.6 436.4,591.0 440.5,588.4 444.6,585.8 448.6,583.2 452.7,580.5 456.8,577.9 460.9,575.3 464.9,572.7 469.0,570.1 473.1,567.5 477.2,564.9 481.3,562.4 485.3,559.8 489.4,557.3 493.5,554.7 497.6,552.2 499.6,550.9 501.4,549.9 501.6,549.7 503.1,548.8 504.9,547.7 505.7,547.2 506.7,546.6 509.8,544.7 513.9,542.3 517.9,539.8 522.0,537.4 526.1,535.0 530.2,532.7 534.2,530.3 538.3,528.0 542.4,525.7 546.5,523.4 550.5,521.2 554.6,519.0 558.7,516.8 562.8,514.7 566.8,512.6 570.9,510.5 575.0,508.5 579.1,506.5 583.2,504.5 587.2,502.6 590.0,501.3 591.3,500.7 591.7,500.5 593.5,499.7 595.4,498.8 599.5,497.0 603.5,495.3 607.6,493.5 611.7,491.9 615.8,490.2 619.8,488.7 623.9,487.1 628.0,485.6 632.1,484.2 636.1,482.8 640.2,481.4 644.3,480.1 648.4,478.9 652.4,477.7 656.5,476.5 660.6,475.4 664.7,474.4 668.7,473.4 672.8,472.5 676.9,471.6 681.0,470.8 685.0,470.0 689.1,469.3 693.2,468.6 697.3,468.0 701.4,467.5 705.4,467.0 709.5,466.5 713.6,466.2 717.7,465.8 721.7,465.6 725.8,465.4 729.9,465.2 734.0,465.1 738.0,465.1 742.1,465.1 746.2,465.2 750.3,465.4 754.3,465.6 758.4,465.8 762.5,466.2 766.6,466.5 767.1,466.6 768.9,466.8 770.6,467.0 770.7,467.0 774.7,467.5 778.8,468.0 782.9,468.6 786.9,469.3 791.0,470.0 795.1,470.8 799.2,471.6 803.2,472.5 807.3,473.5 811.4,474.5 815.5,475.5 819.6,476.6 823.6,477.8 827.7,479.0 831.8,480.3 835.9,481.6 839.9,483.0 844.0,484.4 848.1,485.9 852.2,487.5 856.2,489.1 860.3,490.7 864.4,492.4 868.5,494.1 872.5,495.9 876.6,497.8 880.7,499.6 884.8,501.6 888.8,503.6 892.9,505.6" fill="none" stroke="#8080ff" stroke-width="3" stroke-linejoin="round" stroke-linecap="round"/><polyline points="81.8,753.3 85.9,753.2 90.0,753.0 94.0,752.9 98.1,752.7 102.2,752.5 106.3,752.3 110.3,752.1 114.4,751.9 118.5,751.6 122.6,751.4 126.6,751.1 130.7,750.9 134.8,750.6 138.9,750.3 143.0,749.9 147.0,749.6 151.1,749.2 155.2,748.8 159.3,748.4 163.3,748.0 167.4,747.5 171.5,747.0 175.6,746.5 179.6,746.0 183.7,745.4 187.8,744.8 191.9,744.2 195.9,743.6 200.0,742.9 204.1,742.2 208.2,741.4 212.2,740.7 216.3,739.8 220.4,739.0 224.5,738.1 228.5,737.2 232.6,736.2 236.7,735.2 240.8,734.1 244.8,733.1 248.9,731.9 253.0,730.7 257.1,729.5 261.2,728.2 265.2,726.9 269.3,725.5 273.4,724.1 277.5,722.6 281.5,721.1 285.6,719.5 289.7,717.9 293.8,716.2 297.8,714.4 301.9,712.7 306.0,710.8 310.1,708.9 314.1,706.9 318.2,704.9 322.3,702.8 326.4,700.7 330.4,698.5 334.5,696.2 338.6,693.9 342.7,691.5 346.7,689.1 350.8,686.6 354.9,684.0 359.0,681.4 363.1,678.8 367.1,676.0 371.2,673.2 375.3,670.4 379.4,667.5 383.4,664.6 387.5,661.5 391.6,658.5 395.7,655.4 399.7,652.2 403.8,649.0 407.9,645.7 412.0,642.4 416.0,639.0 420.1,635.6 424.2,632.2 428.3,628.7 432.3,625.1 436.4,621.6 440.5,617.9 444.6,614.3 448.6,610.6 452.7,606.9 456.8,603.2 460.9,599.4 464.9,595.6 469.0,591.8 473.1,587.9 477.2,584.1 481.3,580.2 485.3,576.3 489.4,572.4 493.5,568.5 497.6,564.6 499.6,562.6 501.4,560.9 501.6,560.7 503.1,559.2 504.9,557.5 505.7,556.8 506.7,555.8 509.8,552.9 513.9,549.0 517.9,545.1 522.0,541.2 526.1,537.3 530.2,533.4 534.2,529.6 538.3,525.8 542.4,522.0 546.5,518.2 550.5,514.5 554.6,510.8 558.7,507.1 562.8,503.5 566.8,499.9 570.9,496.3 575.0,492.8 579.1,489.4 583.2,486.0 587.2,482.6 590.0,480.4 591.3,479.3 591.7,479.0 593.5,477.6 595.4,476.1 599.5,472.9 603.5,469.8 607.6,466.7 611.7,463.7 615.8,460.8 619.8,458.0 623.9,455.2 628.0,452.5 632.1,449.9 636.1,447.3 640.2,444.8 644.3,442.5 648.4,440.2 652.4,437.9 656.5,435.8 660.6,433.7 664.7,431.8 668.7,429.9 672.8,428.1 676.9,426.4 681.0,424.8 685.0,423.3 689.1,421.9 693.2,420.5 697.3,419.3 701.4,418.2 705.4,417.1 709.5,416.2 713.6,415.3 717.7,414.6 721.7,413.9 725.8,413.3 729.9,412.8 734.0,412.5 738.0,412.2 742.1,412.0 746.2,411.9 750.3,411.9 754.3,412.0 758.4,412.1 762.5,412.4 766.6,412.8 767.1,412.8 768.9,413.0 770.6,413.2 770.7,413.2 774.7,413.8 778.8,414.4 782.9,415.1 786.9,415.9 791.0,416.8 795.1,417.8 799.2,418.9 803.2,420.0 807.3,421.3 811.4,422.6 815.5,424.0 819.6,425.4 823.6,427.0 827.7,428.6 831.8,430.3 835.9,432.0 839.9,433.9 844.0,435.8 848.1,437.8 852.2,439.8 856.2,441.9 860.3,444.1 864.4,446.4 868.5,448.7 872.5,451.1 876.6,453.5 880.7,456.0 884.8,458.5 888.8,461.1 892.9,463.8" fill="none" stroke="#8080ff" stroke-width="4" stroke-linejoin="round" stroke-linecap="round"/><polyline points="81.8,755.1 85.9,755.1 90.0,755.1 94.0,755.1 98.1,755.1 102.2,755.1 106.3,755.1 110.3,755.1 114.4,755.1 118.5,755.1 122.6,755.1 126.6,755.1 130.7,755.1 134.8,755.1 138.9,755.1 143.0,755.1 147.0,755.1 151.1,755.1 155.2,755.1 159.3,755.1 163.3,755.1 167.4,755.1 171.5,755.1 175.6,755.1 179.6,755.1 183.7,755.1 187.8,755.1 191.9,755.1 195.9,755.1 200.0,755.1 204.1,755.1 208.2,755.1 212.2,755.1 216.3,755.1 220.4,755.1 224.5,755.1 228.5,755.1 232.6,755.1 236.7,755.1 240.8,755.1 244.8,755.1 248.9,755.1 253.0,755.1 257.1,755.1 261.2,755.1 265.2,755.1 269.3,755.1 273.4,755.1 277.5,755.1 281.5,755.1 285.6,755.1 289.7,755.1 293.8,755.1 297.8,755.1 301.9,755.1 306.0,755.1 310.1,755.1 314.1,755.1 318.2,755.1 322.3,755.1 326.4,755.1 330.4,755.1 334.5,755.1 338.6,755.1 342.7,755.1 346.7,755.1 350.8,755.1 354.9,755.1 359.0,755.1 363.1,755.1 367.1,755.1 371.2,755.1 375.3,755.1 379.4,755.1 383.4,755.1 387.5,755.1 391.6,755.1 395.7,755.1 399.7,755.1 403.8,755.1 407.9,755.1 412.0,755.1 416.0,755.1 420.1,755.1 424.2,755.1 428.3,755.1 432.3,755.1 436.4,755.1 440.5,755.1 444.6,755.1 448.6,755.1 452.7,755.1 456.8,755.1 460.9,755.1 464.9,755.1 469.0,755.1 473.1,755.1 477.2,755.1 481.3,755.1 485.3,755.1 489.4,755.1 493.5,755.1 497.6,755.1 499.6,754.9 501.4,754.0 501.6,753.7 503.1,751.0 504.9,745.0 505.7,741.5 506.7,736.9 509.8,721.3 513.9,700.5 517.9,679.8 522.0,659.0 526.1,638.3 530.2,617.5 534.2,596.8 538.3,576.0 542.4,555.3 546.5,534.6 550.5,513.8 554.6,493.1 558.7,472.3 562.8,451.6 566.8,430.8 570.9,410.1 575.0,389.3 579.1,368.6 583.2,347.8 587.2,327.1 590.0,314.2 591.3,309.3 591.7,308.2 593.5,305.2 595.4,304.3 599.5,304.2 603.5,304.2 607.6,304.2 611.7,304.2 615.8,304.2 619.8,304.2 623.9,304.2 628.0,304.2 632.1,304.2 636.1,304.2 640.2,304.2 644.3,304.2 648.4,304.2 652.4,304.2 656.5,304.2 660.6,304.2 664.7,304.2 668.7,304.2 672.8,304.2 676.9,304.2 681.0,304.2 685.0,304.2 689.1,304.2 693.2,304.2 697.3,304.2 701.4,304.2 705.4,304.2 709.5,304.2 713.6,304.2 717.7,304.2 721.7,304.2 725.8,304.2 729.9,304.2 734.0,304.2 738.0,304.2 742.1,304.2 746.2,304.2 750.3,304.2 754.3,304.2 758.4,304.2 762.5,304.2 766.6,304.3 767.1,304.4 768.9,305.0 770.6,306.2 770.7,306.2 774.7,310.1 778.8,314.3 782.9,318.4 786.9,322.6 791.0,326.7 795.1,330.9 799.2,335.0 803.2,339.2 807.3,343.3 811.4,347.5 815.5,351.6 819.6,355.8 823.6,359.9 827.7,364.1 831.8,368.2 835.9,372.4 839.9,376.5 844.0,380.7 848.1,384.8 852.2,389.0 856.2,393.1 860.3,397.3 864.4,401.4 868.5,405.6 872.5,409.7 876.6,413.9 880.7,418.0 884.8,422.2 888.8,426.3 892.9,430.5" fill="none" stroke="#8080ff" stroke-width="5" stroke-linejoin="round" stroke-linecap="round"/>
</g>
<g shape-rendering="crispEdges" stroke-width="1">
<line x1="71" x2="903" y1="539.5" y2="539.5" stroke="#fff"/>
<line x1="71" x2="903" y1="556.5" y2="556.5" stroke="#f00000" stroke-dasharray="18 6"/>
<line x1="487.5" x2="487.5" y1="268" y2="772" stroke="#ffff00"/>
<line x1="71" x2="903" y1="424.5" y2="424.5" stroke="#fff" stroke-dasharray="1 1"/>
<line x1="779.5" x2="779.5" y1="268" y2="772" stroke="#fff" stroke-dasharray="1 1"/>
</g>
<g stroke="#b0b0b0" stroke-width="1" shape-rendering="crispEdges">
<line x1="67" x2="71" y1="773.5" y2="773.5"/><line x1="67" x2="71" y1="755.5" y2="755.5"/><line x1="69" x2="71" y1="759.5" y2="759.5"/><line x1="69" x2="71" y1="764.5" y2="764.5"/><line x1="69" x2="71" y1="769.5" y2="769.5"/><line x1="67" x2="71" y1="737.5" y2="737.5"/><line x1="69" x2="71" y1="741.5" y2="741.5"/><line x1="69" x2="71" y1="746.5" y2="746.5"/><line x1="69" x2="71" y1="751.5" y2="751.5"/><line x1="67" x2="71" y1="719.5" y2="719.5"/><line x1="69" x2="71" y1="723.5" y2="723.5"/><line x1="69" x2="71" y1="728.5" y2="728.5"/><line x1="69" x2="71" y1="733.5" y2="733.5"/><line x1="67" x2="71" y1="701.5" y2="701.5"/><line x1="69" x2="71" y1="705.5" y2="705.5"/><line x1="69" x2="71" y1="710.5" y2="710.5"/><line x1="69" x2="71" y1="715.5" y2="715.5"/><line x1="67" x2="71" y1="683.5" y2="683.5"/><line x1="69" x2="71" y1="687.5" y2="687.5"/><line x1="69" x2="71" y1="692.5" y2="692.5"/><line x1="69" x2="71" y1="697.5" y2="697.5"/><line x1="67" x2="71" y1="665.5" y2="665.5"/><line x1="69" x2="71" y1="669.5" y2="669.5"/><line x1="69" x2="71" y1="674.5" y2="674.5"/><line x1="69" x2="71" y1="679.5" y2="679.5"/><line x1="67" x2="71" y1="647.5" y2="647.5"/><line x1="69" x2="71" y1="651.5" y2="651.5"/><line x1="69" x2="71" y1="656.5" y2="656.5"/><line x1="69" x2="71" y1="661.5" y2="661.5"/><line x1="67" x2="71" y1="629.5" y2="629.5"/><line x1="69" x2="71" y1="633.5" y2="633.5"/><line x1="69" x2="71" y1="638.5" y2="638.5"/><line x1="69" x2="71" y1="643.5" y2="643.5"/><line x1="67" x2="71" y1="611.5" y2="611.5"/><line x1="69" x2="71" y1="615.5" y2="615.5"/><line x1="69" x2="71" y1="620.5" y2="620.5"/><line x1="69" x2="71" y1="625.5" y2="625.5"/><line x1="67" x2="71" y1="593.5" y2="593.5"/><line x1="69" x2="71" y1="597.5" y2="597.5"/><line x1="69" x2="71" y1="602.5" y2="602.5"/><line x1="69" x2="71" y1="607.5" y2="607.5"/><line x1="67" x2="71" y1="575.5" y2="575.5"/><line x1="69" x2="71" y1="579.5" y2="579.5"/><line x1="69" x2="71" y1="584.5" y2="584.5"/><line x1="69" x2="71" y1="589.5" y2="589.5"/><line x1="67" x2="71" y1="557.5" y2="557.5"/><line x1="69" x2="71" y1="561.5" y2="561.5"/><line x1="69" x2="71" y1="566.5" y2="566.5"/><line x1="69" x2="71" y1="571.5" y2="571.5"/><line x1="67" x2="71" y1="539.5" y2="539.5"/><line x1="69" x2="71" y1="543.5" y2="543.5"/><line x1="69" x2="71" y1="548.5" y2="548.5"/><line x1="69" x2="71" y1="553.5" y2="553.5"/><line x1="67" x2="71" y1="521.5" y2="521.5"/><line x1="69" x2="71" y1="525.5" y2="525.5"/><line x1="69" x2="71" y1="530.5" y2="530.5"/><line x1="69" x2="71" y1="535.5" y2="535.5"/><line x1="67" x2="71" y1="502.5" y2="502.5"/><line x1="69" x2="71" y1="506.5" y2="506.5"/><line x1="69" x2="71" y1="511.5" y2="511.5"/><line x1="69" x2="71" y1="516.5" y2="516.5"/><line x1="67" x2="71" y1="484.5" y2="484.5"/><line x1="69" x2="71" y1="488.5" y2="488.5"/><line x1="69" x2="71" y1="493.5" y2="493.5"/><line x1="69" x2="71" y1="498.5" y2="498.5"/><line x1="67" x2="71" y1="466.5" y2="466.5"/><line x1="69" x2="71" y1="470.5" y2="470.5"/><line x1="69" x2="71" y1="475.5" y2="475.5"/><line x1="69" x2="71" y1="480.5" y2="480.5"/><line x1="67" x2="71" y1="448.5" y2="448.5"/><line x1="69" x2="71" y1="452.5" y2="452.5"/><line x1="69" x2="71" y1="457.5" y2="457.5"/><line x1="69" x2="71" y1="462.5" y2="462.5"/><line x1="67" x2="71" y1="430.5" y2="430.5"/><line x1="69" x2="71" y1="434.5" y2="434.5"/><line x1="69" x2="71" y1="439.5" y2="439.5"/><line x1="69" x2="71" y1="444.5" y2="444.5"/><line x1="67" x2="71" y1="412.5" y2="412.5"/><line x1="69" x2="71" y1="416.5" y2="416.5"/><line x1="69" x2="71" y1="421.5" y2="421.5"/><line x1="69" x2="71" y1="426.5" y2="426.5"/><line x1="67" x2="71" y1="394.5" y2="394.5"/><line x1="69" x2="71" y1="398.5" y2="398.5"/><line x1="69" x2="71" y1="403.5" y2="403.5"/><line x1="69" x2="71" y1="408.5" y2="408.5"/><line x1="67" x2="71" y1="376.5" y2="376.5"/><line x1="69" x2="71" y1="380.5" y2="380.5"/><line x1="69" x2="71" y1="385.5" y2="385.5"/><line x1="69" x2="71" y1="390.5" y2="390.5"/><line x1="67" x2="71" y1="358.5" y2="358.5"/><line x1="69" x2="71" y1="362.5" y2="362.5"/><line x1="69" x2="71" y1="367.5" y2="367.5"/><line x1="69" x2="71" y1="372.5" y2="372.5"/><line x1="67" x2="71" y1="340.5" y2="340.5"/><line x1="69" x2="71" y1="344.5" y2="344.5"/><line x1="69" x2="71" y1="349.5" y2="349.5"/><line x1="69" x2="71" y1="354.5" y2="354.5"/><line x1="67" x2="71" y1="322.5" y2="322.5"/><line x1="69" x2="71" y1="326.5" y2="326.5"/><line x1="69" x2="71" y1="331.5" y2="331.5"/><line x1="69" x2="71" y1="336.5" y2="336.5"/><line x1="67" x2="71" y1="304.5" y2="304.5"/><line x1="69" x2="71" y1="308.5" y2="308.5"/><line x1="69" x2="71" y1="313.5" y2="313.5"/><line x1="69" x2="71" y1="318.5" y2="318.5"/><line x1="67" x2="71" y1="286.5" y2="286.5"/><line x1="69" x2="71" y1="290.5" y2="290.5"/><line x1="69" x2="71" y1="295.5" y2="295.5"/><line x1="69" x2="71" y1="300.5" y2="300.5"/><line x1="67" x2="71" y1="268.5" y2="268.5"/><line x1="69" x2="71" y1="272.5" y2="272.5"/><line x1="69" x2="71" y1="277.5" y2="277.5"/><line x1="69" x2="71" y1="282.5" y2="282.5"/><line x1="77.5" x2="77.5" y1="774" y2="776"/><line x1="95.5" x2="95.5" y1="774" y2="776"/><line x1="113.5" x2="113.5" y1="773" y2="778"/><line x1="131.5" x2="131.5" y1="774" y2="776"/><line x1="148.5" x2="148.5" y1="774" y2="776"/><line x1="166.5" x2="166.5" y1="774" y2="776"/><line x1="184.5" x2="184.5" y1="773" y2="778"/><line x1="201.5" x2="201.5" y1="774" y2="776"/><line x1="219.5" x2="219.5" y1="774" y2="776"/><line x1="237.5" x2="237.5" y1="774" y2="776"/><line x1="255.5" x2="255.5" y1="773" y2="778"/><line x1="272.5" x2="272.5" y1="774" y2="776"/><line x1="290.5" x2="290.5" y1="774" y2="776"/><line x1="308.5" x2="308.5" y1="774" y2="776"/><line x1="325.5" x2="325.5" y1="773" y2="778"/><line x1="343.5" x2="343.5" y1="774" y2="776"/><line x1="361.5" x2="361.5" y1="774" y2="776"/><line x1="379.5" x2="379.5" y1="774" y2="776"/><line x1="396.5" x2="396.5" y1="773" y2="778"/><line x1="414.5" x2="414.5" y1="774" y2="776"/><line x1="432.5" x2="432.5" y1="774" y2="776"/><line x1="449.5" x2="449.5" y1="774" y2="776"/><line x1="467.5" x2="467.5" y1="773" y2="778"/><line x1="485.5" x2="485.5" y1="774" y2="776"/><line x1="503.5" x2="503.5" y1="774" y2="776"/><line x1="520.5" x2="520.5" y1="774" y2="776"/><line x1="538.5" x2="538.5" y1="773" y2="778"/><line x1="556.5" x2="556.5" y1="774" y2="776"/><line x1="574.5" x2="574.5" y1="774" y2="776"/><line x1="591.5" x2="591.5" y1="774" y2="776"/><line x1="609.5" x2="609.5" y1="773" y2="778"/><line x1="627.5" x2="627.5" y1="774" y2="776"/><line x1="644.5" x2="644.5" y1="774" y2="776"/><line x1="662.5" x2="662.5" y1="774" y2="776"/><line x1="680.5" x2="680.5" y1="773" y2="778"/><line x1="698.5" x2="698.5" y1="774" y2="776"/><line x1="715.5" x2="715.5" y1="774" y2="776"/><line x1="733.5" x2="733.5" y1="774" y2="776"/><line x1="751.5" x2="751.5" y1="773" y2="778"/><line x1="768.5" x2="768.5" y1="774" y2="776"/><line x1="786.5" x2="786.5" y1="774" y2="776"/><line x1="804.5" x2="804.5" y1="774" y2="776"/><line x1="822.5" x2="822.5" y1="773" y2="778"/><line x1="839.5" x2="839.5" y1="774" y2="776"/><line x1="857.5" x2="857.5" y1="774" y2="776"/><line x1="875.5" x2="875.5" y1="774" y2="776"/><line x1="892.5" x2="892.5" y1="773" y2="778"/>
</g>
<g font-family="Liberation Sans, Arial, sans-serif" font-size="10.75px" fill="#fff">
<text x="64" y="776.7" text-anchor="end">-6500</text><text x="64" y="758.7" text-anchor="end">-6000</text><text x="64" y="740.6" text-anchor="end">-5500</text><text x="64" y="722.6" text-anchor="end">-5000</text><text x="64" y="704.6" text-anchor="end">-4500</text><text x="64" y="686.5" text-anchor="end">-4000</text><text x="64" y="668.5" text-anchor="end">-3500</text><text x="64" y="650.5" text-anchor="end">-3000</text><text x="64" y="632.4" text-anchor="end">-2500</text><text x="64" y="614.4" text-anchor="end">-2000</text><text x="64" y="596.3" text-anchor="end">-1500</text><text x="64" y="578.3" text-anchor="end">-1000</text><text x="64" y="560.3" text-anchor="end">-500</text><text x="64" y="542.2" text-anchor="end">0</text><text x="64" y="524.2" text-anchor="end">500</text><text x="64" y="506.2" text-anchor="end">1000</text><text x="64" y="488.1" text-anchor="end">1500</text><text x="64" y="470.1" text-anchor="end">2000</text><text x="64" y="452.1" text-anchor="end">2500</text><text x="64" y="434.0" text-anchor="end">3000</text><text x="64" y="416.0" text-anchor="end">3500</text><text x="64" y="398.0" text-anchor="end">4000</text><text x="64" y="379.9" text-anchor="end">4500</text><text x="64" y="361.9" text-anchor="end">5000</text><text x="64" y="343.8" text-anchor="end">5500</text><text x="64" y="325.8" text-anchor="end">6000</text><text x="64" y="307.8" text-anchor="end">6500</text><text x="64" y="289.7" text-anchor="end">7000</text><text x="64" y="271.7" text-anchor="end">7500</text>
<text x="113.3" y="791" text-anchor="middle">104 000</text><text x="184.2" y="791" text-anchor="middle">106 000</text><text x="255.1" y="791" text-anchor="middle">108 000</text><text x="326.0" y="791" text-anchor="middle">110 000</text><text x="396.8" y="791" text-anchor="middle">112 000</text><text x="467.7" y="791" text-anchor="middle">114 000</text><text x="538.6" y="791" text-anchor="middle">116 000</text><text x="609.4" y="791" text-anchor="middle">118 000</text><text x="680.3" y="791" text-anchor="middle">120 000</text><text x="751.2" y="791" text-anchor="middle">122 000</text><text x="822.1" y="791" text-anchor="middle">124 000</text><text x="892.9" y="791" text-anchor="middle">126 000</text>
</g>
<text x="84.5" y="258" font-family="Liberation Sans, Arial, sans-serif" font-size="14.55px" fill="#8a8a8a" xml:space="preserve">Date:24.09.2020-00:00  RTS.FORTS.Z2020:124916  P/L:-258.29  Delta:-0.345  Gamma:-0.0001  Theta:121  Vega:-189</text>
</svg>
</body></html>
